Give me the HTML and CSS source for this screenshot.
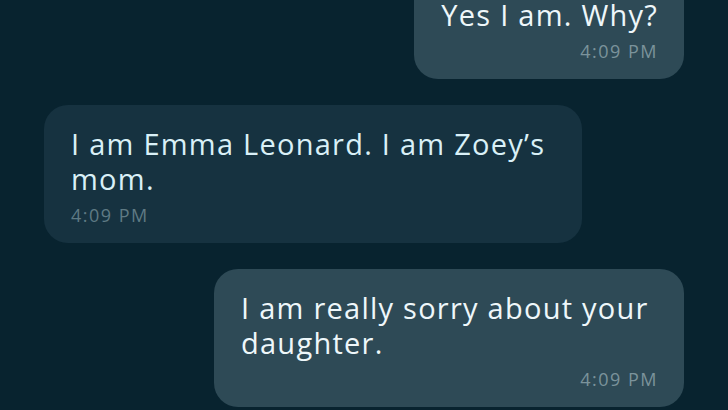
FILE: index.html
```html
<!DOCTYPE html>
<html lang="en">
<head>
    <meta charset="UTF-8">
    <meta name="viewport" content="width=device-width, initial-scale=1.0">
    <title>Chat</title>
    <link rel="stylesheet" href="styles.css">
</head>
<body>

    <div class="chat">
        <div class="msg out">
            <p class="text">Yes I am. Why?</p>
            <span class="time">4:09 PM</span>
        </div>

        <div class="msg in">
            <p class="text">I am Emma Leonard. I am Zoey’s mom.</p>
            <span class="time">4:09 PM</span>
        </div>

        <div class="msg out">
            <p class="text">I am really sorry about your daughter.</p>
            <span class="time">4:09 PM</span>
        </div>
    </div>

</body>
</html>
```

FILE: styles.css
```css
html, body {
    height: 100%;
}
body {
    margin: 0;
    background-color: #08232f;
    font-family: 'Open Sans', sans-serif;
    overflow: hidden;
}
.chat {
    display: flex;
    flex-direction: column;
    gap: 26px;
    padding: 0 44px;
    margin-top: -24px;
}
.msg {
    width: fit-content;
    box-sizing: border-box;
    padding: 21px 26px 17px 27px;
    border-radius: 24px;
}
.msg.out {
    align-self: flex-end;
    max-width: 470px;
    background-color: #2e4a56;
}
.msg.in {
    align-self: flex-start;
    max-width: 538px;
    background-color: #163240;
}
.text {
    margin: 0;
    font-size: 29px;
    line-height: 35px;
    letter-spacing: 1.25px;
    color: #eef7fa;
}
.msg.in .text {
    color: #d9f0f7;
}
.time {
    display: block;
    margin-top: 8px;
    font-size: 18px;
    line-height: 22px;
    letter-spacing: 1.5px;
    color: #7b939b;
}
.msg.out .time {
    text-align: right;
}
.msg.in .time {
    color: #5f7a84;
}
```
